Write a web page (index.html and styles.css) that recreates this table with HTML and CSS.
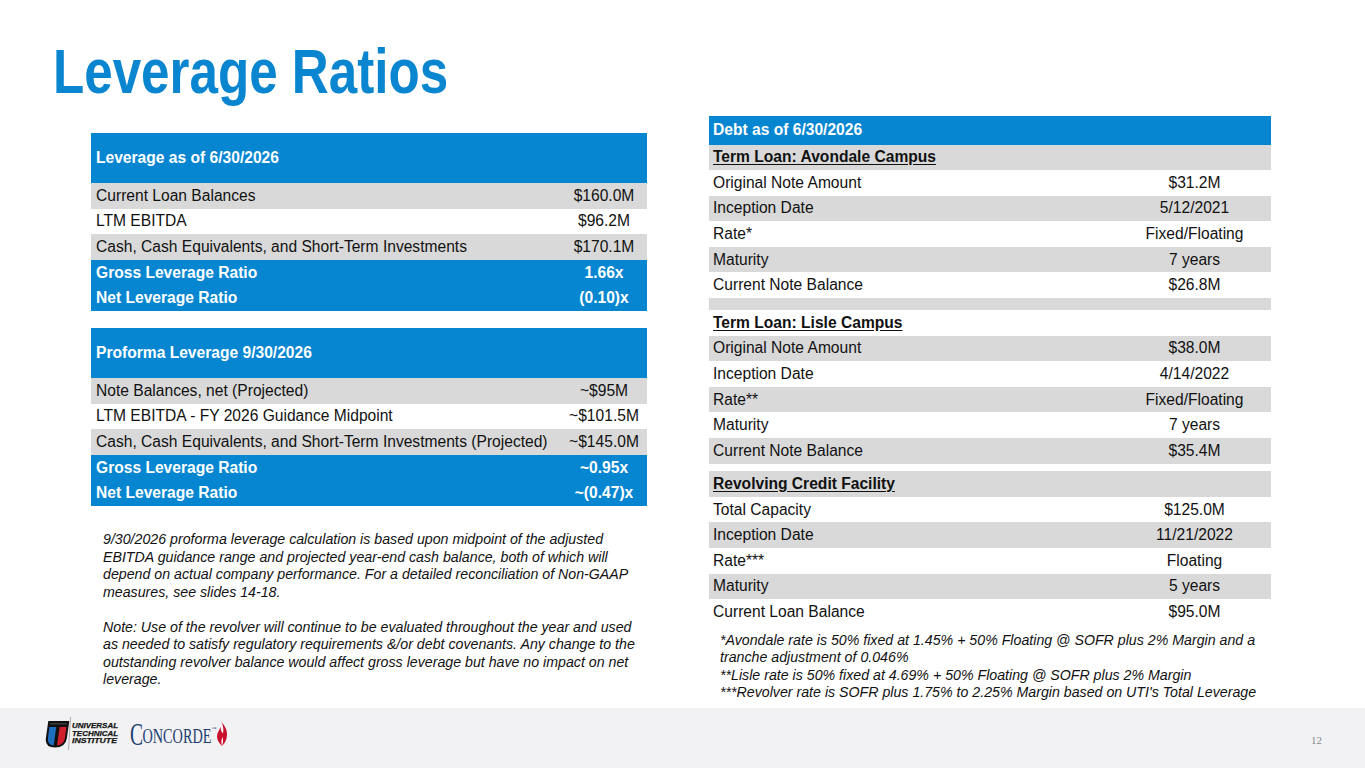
FILE: index.html
```html
<!DOCTYPE html>
<html lang="en">
<head>
<meta charset="utf-8">
<title>Leverage Ratios</title>
<link rel="stylesheet" href="styles.css">
</head>
<body>
<div class="slide">
  <h1 class="title"><span class="title-t">Leverage Ratios</span></h1>
  <main class="content">
    <section class="left">
      <table class="lev">
        <colgroup><col class="c-label"><col class="c-val"></colgroup>
        <thead><tr><th colspan="2" class="hdr">Leverage as of 6/30/2026</th></tr></thead>
        <tbody>
          <tr class="g"><td>Current Loan Balances</td><td class="v">$160.0M</td></tr>
          <tr><td>LTM EBITDA</td><td class="v">$96.2M</td></tr>
          <tr class="g"><td>Cash, Cash Equivalents, and Short-Term Investments</td><td class="v">$170.1M</td></tr>
          <tr class="b"><td>Gross Leverage Ratio</td><td class="v">1.66x</td></tr>
          <tr class="b"><td>Net Leverage Ratio</td><td class="v">(0.10)x</td></tr>
        </tbody>
      </table>
      <table class="lev lev2">
        <colgroup><col class="c-label"><col class="c-val"></colgroup>
        <thead><tr><th colspan="2" class="hdr">Proforma Leverage 9/30/2026</th></tr></thead>
        <tbody>
          <tr class="g"><td>Note Balances, net (Projected)</td><td class="v">~$95M</td></tr>
          <tr><td>LTM EBITDA - FY 2026 Guidance Midpoint</td><td class="v">~$101.5M</td></tr>
          <tr class="g"><td>Cash, Cash Equivalents, and Short-Term Investments (Projected)</td><td class="v">~$145.0M</td></tr>
          <tr class="b"><td>Gross Leverage Ratio</td><td class="v">~0.95x</td></tr>
          <tr class="b"><td>Net Leverage Ratio</td><td class="v">~(0.47)x</td></tr>
        </tbody>
      </table>
      <div class="note">
        <p>9/30/2026 proforma leverage calculation is based upon midpoint of the adjusted<br>EBITDA guidance range and projected year-end cash balance, both of which will<br>depend on actual company performance. For a detailed reconciliation of Non-GAAP<br>measures, see slides 14-18.</p>
        <p>Note: Use of the revolver will continue to be evaluated throughout the year and used<br>as needed to satisfy regulatory requirements &amp;/or debt covenants. Any change to the<br>outstanding revolver balance would affect gross leverage but have no impact on net<br>leverage.</p>
      </div>
    </section>
    <section class="right">
      <table class="debt">
        <colgroup><col class="d-label"><col class="d-val"></colgroup>
        <thead><tr><th colspan="2" class="dhdr">Debt as of 6/30/2026</th></tr></thead>
        <tbody>
          <tr class="g sub"><td colspan="2"><span class="u">Term Loan: Avondale Campus</span></td></tr>
          <tr><td>Original Note Amount</td><td class="v">$31.2M</td></tr>
          <tr class="g"><td>Inception Date</td><td class="v">5/12/2021</td></tr>
          <tr><td>Rate*</td><td class="v">Fixed/Floating</td></tr>
          <tr class="g"><td>Maturity</td><td class="v">7 years</td></tr>
          <tr><td>Current Note Balance</td><td class="v">$26.8M</td></tr>
          <tr class="g gap12"><td colspan="2"></td></tr>
          <tr class="sub"><td colspan="2"><span class="u">Term Loan: Lisle Campus</span></td></tr>
          <tr class="g"><td>Original Note Amount</td><td class="v">$38.0M</td></tr>
          <tr><td>Inception Date</td><td class="v">4/14/2022</td></tr>
          <tr class="g"><td>Rate**</td><td class="v">Fixed/Floating</td></tr>
          <tr><td>Maturity</td><td class="v">7 years</td></tr>
          <tr class="g"><td>Current Note Balance</td><td class="v">$35.4M</td></tr>
          <tr class="gap8"><td colspan="2"></td></tr>
          <tr class="g sub"><td colspan="2"><span class="u">Revolving Credit Facility</span></td></tr>
          <tr><td>Total Capacity</td><td class="v">$125.0M</td></tr>
          <tr class="g"><td>Inception Date</td><td class="v">11/21/2022</td></tr>
          <tr><td>Rate***</td><td class="v">Floating</td></tr>
          <tr class="g"><td>Maturity</td><td class="v">5 years</td></tr>
          <tr><td>Current Loan Balance</td><td class="v">$95.0M</td></tr>
        </tbody>
      </table>
      <div class="foot">
        <p>*Avondale rate is 50% fixed at 1.45% + 50% Floating @ SOFR plus 2% Margin and a<br>tranche adjustment of 0.046%<br>**Lisle rate is 50% fixed at 4.69% + 50% Floating @ SOFR plus 2% Margin<br>***Revolver rate is SOFR plus 1.75% to 2.25% Margin based on UTI's Total Leverage</p>
      </div>
    </section>
  </main>
  <footer class="footer">
    <div class="logos">
      <svg class="uti" width="76" height="34" viewBox="0 0 76 34" aria-label="Universal Technical Institute">
        <g transform="translate(3 0) skewX(-8)">
          <path d="M1 5 H22 V22 Q22 31.5 11.5 31.5 Q1 31.5 1 22 Z" fill="#111"/>
          <path d="M3 11 H9.8 V29.6 Q3 28.6 3 22 Z" fill="#1f6fc1"/>
          <path d="M13.2 11 H20 V22 Q20 28.6 13.2 29.6 Z" fill="#d0202e"/>
          <path d="M3 7 H20 V8.6 H3 Z" fill="#3a3a3a"/>
        </g>
        <line x1="25.5" y1="1" x2="23.5" y2="34" stroke="#9a9a9a" stroke-width="0.8"/>
        <g class="uti-t">
          <text x="27" y="12.3" textLength="46" lengthAdjust="spacingAndGlyphs">UNIVERSAL</text>
          <text x="27" y="19.7" textLength="46" lengthAdjust="spacingAndGlyphs">TECHNICAL</text>
          <text x="27" y="27.2" textLength="45" lengthAdjust="spacingAndGlyphs">INSTITUTE</text>
        </g>
      </svg>
      <svg class="concorde" width="104" height="40" viewBox="0 0 104 40" aria-label="Concorde">
        <text class="cc-big" x="1.6" y="29" transform="scale(0.63 1)">C</text>
        <text class="cc" x="18.9" y="26.7" transform="scale(0.714 1)">ONCORDE</text>
        <text class="cc-tm" x="82.5" y="14">™</text>
        <path d="M92.5 5.5 C95.5 10 98.5 13.5 98 19.5 C97.5 24.5 95.5 27.5 93 30 C90.5 27.5 88 24.5 88 20.5 C88 16.5 90.5 14 91.5 11 C91.8 14.5 92.8 16.5 93.8 17.5 C95 14.5 94.3 9.5 92.5 5.5 Z" fill="#c8102e"/>
        <path d="M93 30 C92.2 27 92 24 93.6 21 C94.2 24 94.2 27 93 30 Z" fill="#fff"/>
      </svg>
    </div>
    <div class="pagenum">12</div>
  </footer>
</div>
</body>
</html>
```

FILE: styles.css
```css
* { box-sizing: border-box; }
html, body { margin: 0; padding: 0; }
body {
  background: #ffffff;
  font-family: "Liberation Sans", Arial, sans-serif;
  color: #111111;
}
.slide {
  width: 1365px;
  height: 768px;
  display: flex;
  flex-direction: column;
  overflow: hidden;
  background: #ffffff;
}
.title {
  margin: 0;
  padding: 35px 0 0 53px;
  height: 107px;
  flex: none;
  font-family: "Liberation Sans", Arial, sans-serif;
  font-weight: 700;
  font-size: 62.6px;
  line-height: 72px;
  color: #0a85d0;
  white-space: nowrap;
}
.title-t {
  display: inline-block;
  transform: scaleX(0.817);
  transform-origin: 0 0;
}
.content {
  flex: 1;
  display: flex;
  gap: 62px;
  padding: 9px 0 0 91px;
}
.left {
  width: 556px;
  padding-top: 17px;
  display: flex;
  flex-direction: column;
}
.right {
  width: 562px;
  display: flex;
  flex-direction: column;
}
table {
  border-collapse: collapse;
  border-spacing: 0;
  table-layout: fixed;
  width: 100%;
  font-size: 15.6px;
}
td, th {
  padding: 0 0 0 5px;
  height: 25.6px;
  line-height: 18px;
  vertical-align: middle;
  white-space: nowrap;
  text-align: left;
  font-weight: 400;
}
.c-val { width: 86px; }
.d-val { width: 153px; }
td.v { text-align: center; padding: 0; }
.hdr {
  height: 50px;
  background: #0686d1;
  color: #ffffff;
  font-weight: 700;
}
.lev2 { margin-top: 17px; }
tr.g td { background: #d9d9d9; }
tr.b td { background: #0686d1; color: #ffffff; font-weight: 700; }
.debt td, .debt th { padding-left: 4px; }
.debt td.v { padding-left: 0; }
.dhdr {
  height: 28.5px;
  background: #0686d1;
  color: #ffffff;
  font-weight: 700;
}
tr.sub td { font-weight: 700; }
.u { text-decoration: underline; text-underline-offset: 2px; }
tr.gap12 td { height: 12px; padding: 0; line-height: 0; }
tr.gap8 td { height: 7.5px; padding: 0; line-height: 0; }
.note {
  margin-top: 25.5px;
  padding-left: 12px;
  font-size: 14.2px;
  line-height: 17.5px;
  font-style: italic;
  white-space: nowrap;
}
.note p { margin: 0 0 17.5px 0; }
.foot {
  margin-top: 7px;
  padding-left: 11px;
  font-size: 14.2px;
  line-height: 17.5px;
  font-style: italic;
  white-space: nowrap;
}
.foot p { margin: 0; }
.footer {
  flex: none;
  height: 60px;
  background: #f2f2f4;
  display: flex;
  align-items: flex-start;
  padding: 0 43px 0 45px;
}
.logos {
  display: flex;
  align-items: flex-start;
  gap: 8px;
  margin-top: 8px;
}
.uti-t {
  font-family: "Liberation Sans", Arial, sans-serif;
  font-weight: 700;
  font-style: italic;
  font-size: 8px;
  fill: #111111;
  stroke: #111111;
  stroke-width: 0.25;
}
.cc-big, .cc, .cc-tm {
  font-family: "Liberation Serif", "Times New Roman", serif;
  fill: #1e3f73;
}
.cc-big { font-size: 31px; }
.cc { font-size: 20px; }
.cc-tm { font-size: 5px; }
.pagenum {
  margin-left: auto;
  margin-top: 27px;
  font-family: "Liberation Serif", serif;
  font-size: 11px;
  line-height: 11px;
  color: #8a8a8a;
}
```
